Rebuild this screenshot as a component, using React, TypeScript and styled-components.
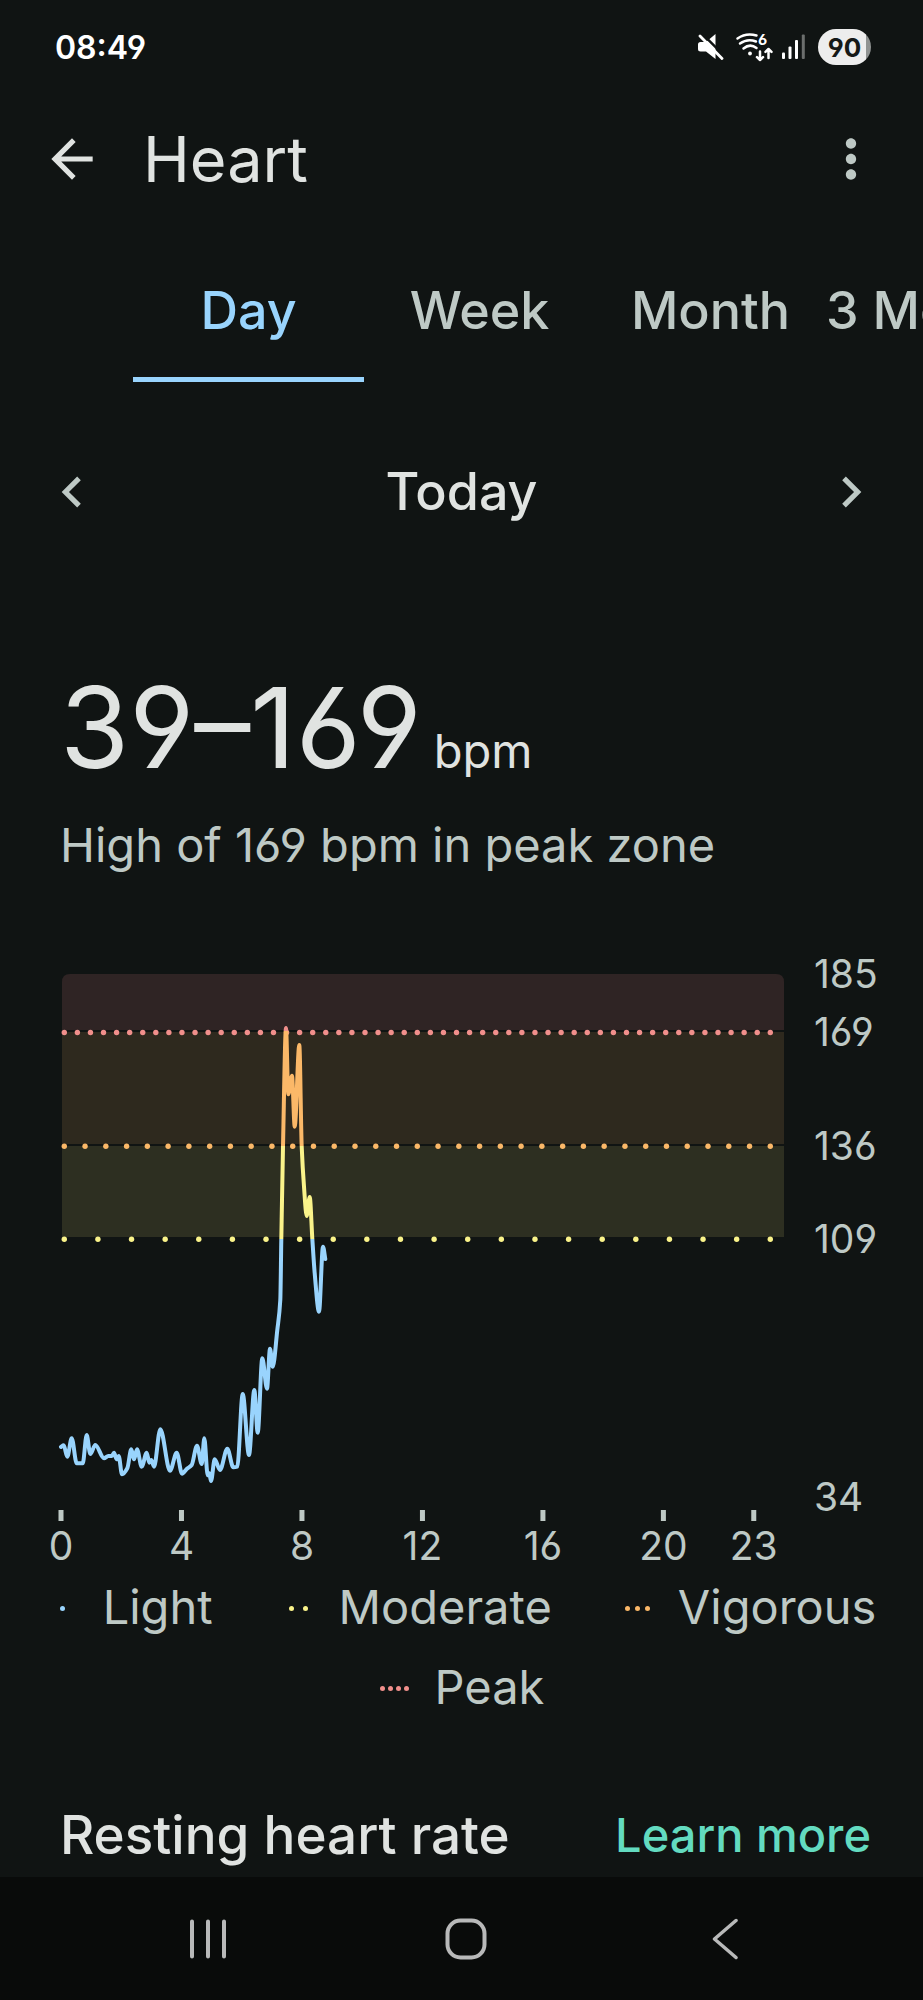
import React, { useState } from 'react';
import styled, { createGlobalStyle } from 'styled-components';

const color = {
  page: '#101413',
  nav: '#090b0a',
  text: '#e0e3e1',
  muted: '#bec9c5',
  blue: '#99d4fd',
  yellow: '#faf38a',
  orange: '#fbb868',
  red: '#f08f8b',
  link: '#63dbc0',
  systemIcon: '#b8b9b9',
};

const GlobalStyle = createGlobalStyle`
  *, *::before, *::after { box-sizing: border-box; }
  body {
    margin: 0;
    background: ${color.page};
    color: ${color.text};
    font-family: Inter, Roboto, sans-serif;
    font-feature-settings: "cv03", "cv04";
  }
  h1, h2, p { margin: 0; }
  button { padding: 0; border: 0; background: none; color: inherit; font: inherit; font-feature-settings: inherit; cursor: pointer; }
  svg { display: block; }
`;

const Screen = styled.div`
  display: flex;
  flex-direction: column;
  min-height: 100vh;
  overflow-x: hidden;
`;

/* Status bar */

const StatusBar = styled.header`
  display: flex;
  align-items: center;
  justify-content: space-between;
  height: 94px;
  padding: 0 52px 0 55px;
`;

const Clock = styled.time`
  color: #fff;
  font-size: 32px;
  font-weight: 600;
`;

const StatusIcons = styled.div`
  display: flex;
  align-items: center;
  gap: 12px;
`;

const ConnectionIcons = styled.div`
  display: flex;
  align-items: center;
  gap: 8px;
`;

const Battery = styled.span`
  display: flex;
  align-items: center;
  justify-content: center;
  width: 53px;
  height: 36px;
  border-radius: 18px;
  background: linear-gradient(to right, #ededed 90%, #909392 90%);
  color: #151918;
  font-size: 26px;
  font-weight: 700;
`;

/* App bar */

const AppBar = styled.div`
  display: flex;
  align-items: center;
  height: 130px;
  padding: 0 41px;
`;

const Title = styled.h1`
  flex: 1;
  padding-left: 40px;
  font-size: 63px;
  font-weight: 400;
`;

const IconButton = styled.button<{ $muted?: boolean }>`
  display: flex;
  width: 62px;
  height: 62px;
  color: ${(p) => (p.$muted ? color.muted : color.text)};
`;

/* Period tabs */

const Tabs = styled.div`
  display: flex;
  margin-top: 20px;
  padding-left: 133px;
  overflow: hidden;
`;

const Tab = styled.button<{ $active: boolean }>`
  flex: none;
  min-width: 231px;
  height: 138px;
  border-bottom: 5px solid ${(p) => (p.$active ? color.blue : 'transparent')};
  color: ${(p) => (p.$active ? color.blue : color.muted)};
  font-size: 52px;
  font-weight: 500;
  white-space: nowrap;
`;

const DateBar = styled.div`
  display: flex;
  align-items: center;
  justify-content: space-between;
  height: 111px;
  margin-top: 54px;
  padding: 0 41px;
`;

const DateLabel = styled.h2`
  font-size: 52px;
  font-weight: 500;
`;

/* Summary */

const Summary = styled.section`
  margin-top: 120px;
  padding: 0 52px 0 60px;
`;

const Range = styled.p`
  display: flex;
  align-items: baseline;
  gap: 12px;
  font-size: 112px;
  line-height: 120px;
`;

const Unit = styled.span`
  font-size: 47px;
  line-height: 60px;
`;

const Insight = styled.p`
  margin-top: 28px;
  color: ${color.muted};
  font-size: 47px;
  line-height: 60px;
`;

/* Chart */

const ChartSvg = styled.svg`
  width: 100%;
  height: auto;
  margin-top: 75px;
`;

const AxisText = styled.text`
  fill: ${color.muted};
  font-size: 39px;
`;

const Legend = styled.ul`
  display: flex;
  flex-wrap: wrap;
  justify-content: center;
  gap: 24px 70px;
  margin: 9px 0 0;
  padding: 0 43px;
  list-style: none;
`;

const LegendItem = styled.li`
  display: flex;
  align-items: center;
  gap: 24px;
  color: ${color.muted};
  font-size: 47px;
  line-height: 56px;
`;

const Swatch = styled.span<{ $gap: number }>`
  display: flex;
  justify-content: center;
  gap: ${(p) => p.$gap}px;
  width: 32px;
  padding-top: 3px;
`;

const Dot = styled.i<{ $color: string }>`
  width: 5px;
  height: 5px;
  border-radius: 50%;
  background: ${(p) => p.$color};
`;

/* Resting heart rate */

const SectionHeader = styled.section`
  display: flex;
  align-items: center;
  justify-content: space-between;
  margin-top: 90px;
  padding: 0 52px 12px 60px;
  line-height: 60px;
`;

const SectionTitle = styled.h2`
  font-size: 53px;
  font-weight: 500;
`;

const LearnMore = styled.a`
  color: ${color.link};
  font-size: 47px;
  font-weight: 500;
  text-decoration: none;
`;

/* System navigation */

const SystemNav = styled.nav`
  display: flex;
  height: 123px;
  margin-top: auto;
  padding: 0 69px 0 79px;
  background: ${color.nav};
`;

const SystemButton = styled.button`
  flex: 1;
  display: flex;
  align-items: center;
  justify-content: center;
  color: ${color.systemIcon};
`;

/* Chart data: time of day plotted as x, heart rate plotted as y, in chart units */

type Point = [number, number];

const WIDTH = 923;
const HEIGHT = 620;
const LEFT = 62;
const RIGHT = 784;

const heartRate: Point[] = [
  [61, 497], [63.7, 495.3], [67.3, 506.7], [71.7, 488.3], [76.7, 513.3], [82.7, 513.3], [86.7, 485],
  [90.3, 504], [95.3, 495], [104, 508.3], [108.3, 506], [112, 506], [114, 502.7], [116.7, 509.3],
  [118.7, 506], [122, 524.3], [127.3, 518.3], [131.3, 499.3], [134, 509.3], [137, 499.3], [141.7, 516.7],
  [146.7, 502.7], [149.3, 512.7], [151.3, 510], [154, 516.7], [160.3, 479.3], [170, 520.7], [176.7, 502.7],
  [182, 523.7], [186.7, 519], [191.7, 515], [197, 495.7], [201.7, 514], [204.3, 488.3], [207.7, 525.3],
  [209.3, 523.3], [211, 531], [214.7, 509.3], [220, 520], [227.3, 498.7], [233.3, 517.3], [237.3, 516.7],
  [242.7, 444], [249, 505], [254.3, 440], [257.7, 482.7], [262.3, 408.3], [267, 438.7], [270, 398.7],
  [272.7, 416.7], [277.3, 380], [280.3, 350], [281.3, 290], [283, 196.7], [286, 78], [288.3, 144.3],
  [292, 125.7], [294.7, 176.7], [299.3, 95], [301.7, 196.7], [304, 236.7], [306.7, 266], [309.7, 247],
  [312.3, 288.3], [314.7, 323.3], [319, 361.7], [323, 296.7], [325.3, 309],
];

/* Monotone cubic interpolation keeps the curve from overshooting its peaks. */
function smoothPath(points: Point[]): string {
  const n = points.length;
  const slope = points.slice(1).map((p, i) => (p[1] - points[i][1]) / (p[0] - points[i][0]));
  const tangent = points.map((_, i) => {
    if (i === 0 || i === n - 1) return slope[Math.min(i, n - 2)];
    const a = slope[i - 1];
    const b = slope[i];
    return a * b <= 0 ? 0 : (2 * a * b) / (a + b);
  });
  let d = `M${points[0][0]} ${points[0][1]}`;
  for (let i = 1; i < n; i++) {
    const [x0, y0] = points[i - 1];
    const [x1, y1] = points[i];
    const h = (x1 - x0) / 3;
    d += `C${x0 + h} ${y0 + tangent[i - 1] * h} ${x1 - h} ${y1 - tangent[i] * h} ${x1} ${y1}`;
  }
  return d;
}

const thresholds = [
  { y: 82.5, count: 55, color: color.red },
  { y: 196.3, count: 35, color: color.orange },
  { y: 289.2, count: 22, color: color.yellow },
];

const rateLabels = [
  { label: '185', y: 24 },
  { label: '169', y: 82 },
  { label: '136', y: 196 },
  { label: '109', y: 289 },
  { label: '34', y: 547 },
];

const hours = [0, 4, 8, 12, 16, 20, 23];
const hourX = (hour: number) => 61 + hour * 30.12;

function HeartRateChart() {
  const first = 64.3;
  const last = 770.3;
  return (
    <ChartSvg viewBox={`0 0 ${WIDTH} ${HEIGHT}`} role="img" aria-label="Heart rate today">
      <defs>
        <linearGradient id="zones" gradientUnits="userSpaceOnUse" x1="0" y1="0" x2="0" y2={HEIGHT}>
          <stop offset={81 / HEIGHT} stopColor={color.red} />
          <stop offset={81 / HEIGHT} stopColor={color.orange} />
          <stop offset={196 / HEIGHT} stopColor={color.orange} />
          <stop offset={196 / HEIGHT} stopColor={color.yellow} />
          <stop offset={289 / HEIGHT} stopColor={color.yellow} />
          <stop offset={289 / HEIGHT} stopColor={color.blue} />
        </linearGradient>
      </defs>
      <path d={`M${LEFT} 80V32q0-8 8-8H${RIGHT - 8}q8 0 8 8V80z`} fill="#2f2424" />
      <rect x={LEFT} y="82" width={RIGHT - LEFT} height="112" fill="#2e291e" />
      <rect x={LEFT} y="196" width={RIGHT - LEFT} height="91" fill="#2d2f21" />
      {thresholds.map((t) =>
        Array.from({ length: t.count }, (_, i) => (
          <circle
            key={`${t.y}-${i}`}
            cx={first + ((last - first) * i) / (t.count - 1)}
            cy={t.y}
            r="2.7"
            fill={t.color}
          />
        )),
      )}
      <path
        d={smoothPath(heartRate)}
        fill="none"
        stroke="url(#zones)"
        strokeWidth="4"
        strokeLinecap="round"
        strokeLinejoin="round"
      />
      {rateLabels.map((r) => (
        <AxisText key={r.label} x="814" y={r.y + 14}>
          {r.label}
        </AxisText>
      ))}
      {hours.map((h) => (
        <g key={h}>
          <rect x={hourX(h) - 2.5} y="560" width="5" height="11" fill={color.muted} />
          <AxisText x={hourX(h)} y="610" textAnchor="middle">
            {h}
          </AxisText>
        </g>
      ))}
    </ChartSvg>
  );
}

const zones = [
  { name: 'Light', dots: 1, gap: 0, color: color.blue },
  { name: 'Moderate', dots: 2, gap: 9, color: color.yellow },
  { name: 'Vigorous', dots: 3, gap: 5, color: color.orange },
  { name: 'Peak', dots: 4, gap: 3, color: color.red },
];

const MutedIcon = () => (
  <svg width="26" height="26" viewBox="0 0 26 26" aria-label="Muted">
    <path d="M2.500 8H8L17.500 0V25L8 17.500H2.500Q0 17.500 0 15V10.500Q0 8 2.500 8Z" fill="#fff" />
    <path d="M3.500-1L27 22.500" stroke={color.page} strokeWidth="2.500" />
    <path d="M2 2L24 24.500" stroke="#fff" strokeWidth="2.800" strokeLinecap="round" />
  </svg>
);

const WifiSvg = styled.svg`
  overflow: visible;
`;

const WifiIcon = () => (
  <WifiSvg width="38" height="30" viewBox="0 0 38 30" aria-label="Wi-Fi 6">
    <g fill="none" stroke="#fff" strokeWidth="2.500" strokeLinecap="round" strokeLinejoin="round">
      <path d="M1.500 6.500Q10 .5 20.500 3.500" />
      <path d="M4 11.500Q11.500 6 20 9.500" />
      <path d="M7.500 16.500Q14 11 20.500 16" />
      <path d="M24 19.500V28M21 25.200L24 28L27 25.200M32.500 26V17M29.500 19.800L32.500 17L35.500 19.800" />
    </g>
    <circle cx="14" cy="21.500" r="1.900" fill="#fff" />
    <text x="22" y="13" fontSize="15" fontWeight="700" fill="#fff">
      6
    </text>
  </WifiSvg>
);

const SignalIcon = () => (
  <svg width="24" height="26" viewBox="0 0 24 26" aria-label="Mobile signal">
    <g fill="#fff">
      <rect x="0" y="18.500" width="3" height="6.500" rx="1" />
      <rect x="6.500" y="12.500" width="3" height="12.500" rx="1" />
      <rect x="13" y="6" width="3" height="19" rx="1" />
      <rect x="19.800" y="0.500" width="3" height="24.500" rx="1" fill="#6b6e6d" />
    </g>
  </svg>
);

const MaterialIcon = ({ d }: { d: string }) => (
  <svg width="62" height="62" viewBox="0 0 24 24" fill="currentColor" aria-hidden="true">
    <path d={d} />
  </svg>
);

const icons = {
  back: 'M20 11H7.830l5.590-5.590L12 4l-8 8 8 8 1.410-1.410L7.830 13H20v-2z',
  more: 'M12 8c1.100 0 2-.9 2-2s-.9-2-2-2-2 .9-2 2 .9 2 2 2zm0 2c-1.100 0-2 .9-2 2s.9 2 2 2 2-.9 2-2-.9-2-2-2zm0 6c-1.100 0-2 .9-2 2s.9 2 2 2 2-.9 2-2-.9-2-2-2z',
  previous: 'M15.410 7.410L14 6l-6 6 6 6 1.410-1.410L10.830 12z',
  next: 'M10 6L8.590 7.410 13.170 12l-4.580 4.590L10 18l6-6z',
};

const periods = ['Day', 'Week', 'Month', '3 Months'];

export default function App() {
  const [period, setPeriod] = useState('Day');
  return (
    <>
      <GlobalStyle />
      <Screen>
        <StatusBar>
          <Clock>08:49</Clock>
          <StatusIcons>
            <MutedIcon />
            <ConnectionIcons>
              <WifiIcon />
              <SignalIcon />
            </ConnectionIcons>
            <Battery>90</Battery>
          </StatusIcons>
        </StatusBar>

        <AppBar>
          <IconButton aria-label="Back">
            <MaterialIcon d={icons.back} />
          </IconButton>
          <Title>Heart</Title>
          <IconButton $muted aria-label="More options">
            <MaterialIcon d={icons.more} />
          </IconButton>
        </AppBar>

        <Tabs role="tablist">
          {periods.map((p) => (
            <Tab key={p} role="tab" aria-selected={p === period} $active={p === period} onClick={() => setPeriod(p)}>
              {p}
            </Tab>
          ))}
        </Tabs>

        <DateBar>
          <IconButton $muted aria-label="Previous day">
            <MaterialIcon d={icons.previous} />
          </IconButton>
          <DateLabel>Today</DateLabel>
          <IconButton $muted aria-label="Next day">
            <MaterialIcon d={icons.next} />
          </IconButton>
        </DateBar>

        <Summary>
          <Range>
            39–169 <Unit>bpm</Unit>
          </Range>
          <Insight>High of 169 bpm in peak zone</Insight>
        </Summary>

        <HeartRateChart />

        <Legend>
          {zones.map((z) => (
            <LegendItem key={z.name}>
              <Swatch $gap={z.gap}>
                {Array.from({ length: z.dots }, (_, i) => (
                  <Dot key={i} $color={z.color} />
                ))}
              </Swatch>
              {z.name}
            </LegendItem>
          ))}
        </Legend>

        <SectionHeader>
          <SectionTitle>Resting heart rate</SectionTitle>
          <LearnMore href="#resting-heart-rate">Learn more</LearnMore>
        </SectionHeader>

        <SystemNav aria-label="System">
          <SystemButton aria-label="Recent apps">
            <svg width="38" height="42" viewBox="0 0 38 42" stroke="currentColor" strokeWidth="4" strokeLinecap="round">
              <path d="M3 3.500V38.500M19 3.500V38.500M35 3.500V38.500" />
            </svg>
          </SystemButton>
          <SystemButton aria-label="Home">
            <svg width="42" height="42" viewBox="0 0 42 42" fill="none" stroke="currentColor" strokeWidth="4">
              <rect x="2.500" y="2.500" width="37" height="37" rx="13" />
            </svg>
          </SystemButton>
          <SystemButton aria-label="Back">
            <svg width="26" height="42" viewBox="0 0 26 42" fill="none" stroke="currentColor" strokeWidth="3.500" strokeLinecap="round" strokeLinejoin="round">
              <path d="M24 2.500L2.500 21L24 39.500" />
            </svg>
          </SystemButton>
        </SystemNav>
      </Screen>
    </>
  );
}
